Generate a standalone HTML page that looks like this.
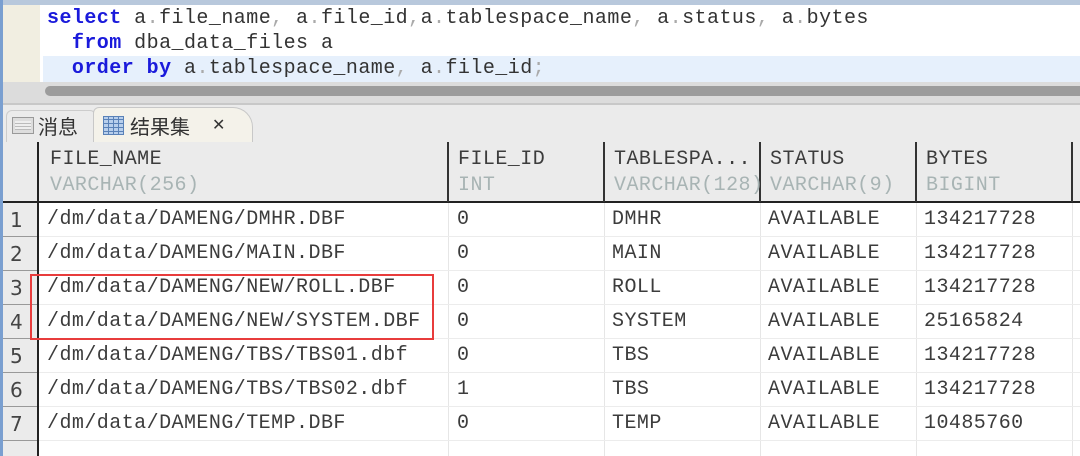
<!DOCTYPE html>
<html><head><meta charset="utf-8"><style>
*{margin:0;padding:0;box-sizing:border-box}
body{width:1080px;height:456px;overflow:hidden;background:#fff;position:relative;font-family:"Liberation Mono","DejaVu Sans Mono",monospace;}
.abs{position:absolute}
.code{font-size:20px;letter-spacing:0.45px;white-space:pre;color:#333;line-height:25px}
.kw{color:#1a1adb;font-weight:bold}
.p{color:#aaa}
.cell{position:absolute;font-size:20px;letter-spacing:0.45px;color:#3c3c3c;white-space:pre}
.sub{color:#a8b4b4}
</style></head><body>
<div class="abs" style="left:0;top:0;width:3px;height:456px;background:#7a9fd0"></div>
<div class="abs" style="left:3px;top:0;width:1077px;height:5px;background:#b8c8dc"></div>
<div class="abs" style="left:3px;top:5px;width:37px;height:78px;background:#f1eee1"></div>
<div class="abs" style="left:40px;top:5px;width:3px;height:78px;background:#fff"></div>
<div class="abs" style="left:43px;top:56px;width:1037px;height:26px;background:#e6f0fc"></div>
<div class="abs code" style="left:47px;top:6px"><span class="kw">select</span> a<span class="p">.</span>file_name<span class="p">,</span> a<span class="p">.</span>file_id<span class="p">,</span>a<span class="p">.</span>tablespace_name<span class="p">,</span> a<span class="p">.</span>status<span class="p">,</span> a<span class="p">.</span>bytes
  <span class="kw">from</span> dba_data_files a
  <span class="kw">order by</span> a<span class="p">.</span>tablespace_name<span class="p">,</span> a<span class="p">.</span>file_id<span class="p">;</span></div>
<div class="abs" style="left:3px;top:82px;width:1077px;height:21px;background:#dcdcdc"></div>
<div class="abs" style="left:45px;top:86px;width:1035px;height:10px;background:#9c9c9c;border-radius:5px 0 0 5px"></div>
<div class="abs" style="left:3px;top:103px;width:1077px;height:2px;background:#c8c8c8"></div>
<div class="abs" style="left:3px;top:105px;width:1077px;height:37px;background:#ebebeb"></div>
<div class="abs" style="left:6px;top:110px;width:90px;height:32px;border:1px solid #ccc;border-bottom:none;border-radius:6px 6px 0 0"></div>
<div class="abs" style="left:93px;top:107px;width:160px;height:35px;background:#f4f2ea;border:1px solid #c8c8c8;border-bottom:none;border-radius:6px 20px 0 0"></div>
<div class="abs" style="left:12px;top:117px;width:22px;height:17px;border:1px solid #999;background:#ddd"></div>
<div class="abs" style="left:15px;top:121px;width:16px;height:9px;background:repeating-linear-gradient(#eee 0 2px,#bbb 2px 3px)"></div>
<div class="abs" style="left:38px;top:111px;font:20px 'Noto Sans CJK SC',sans-serif;color:#333">消息</div>
<div class="abs" style="left:103px;top:116px;width:21px;height:19px;border:1px solid #5a82b8;background:repeating-linear-gradient(90deg,#b8cfec 0 4px,#5a82b8 4px 5px)"></div>
<div class="abs" style="left:103px;top:116px;width:21px;height:19px;background:repeating-linear-gradient(transparent 0 3px,#5a82b8 3px 4px)"></div>
<div class="abs" style="left:130px;top:111px;font:20px 'Noto Sans CJK SC',sans-serif;color:#333">结果集</div>
<div class="abs" style="left:212px;top:115px;font:16px 'DejaVu Sans',sans-serif;color:#333">✕</div>
<div class="abs" style="left:3px;top:142px;width:1077px;height:60px;background:#ebebeb"></div>
<div class="abs" style="left:3px;top:202px;width:34px;height:254px;background:#ebebeb"></div>
<div class="abs" style="left:37px;top:142px;width:2px;height:314px;background:#222"></div>
<div class="abs" style="left:3px;top:201px;width:1077px;height:2px;background:#222"></div>
<div class="abs" style="left:447px;top:142px;width:2px;height:60px;background:#333"></div>
<div class="abs" style="left:603px;top:142px;width:2px;height:60px;background:#333"></div>
<div class="abs" style="left:759px;top:142px;width:2px;height:60px;background:#333"></div>
<div class="abs" style="left:915px;top:142px;width:2px;height:60px;background:#333"></div>
<div class="abs" style="left:1071px;top:142px;width:2px;height:60px;background:#333"></div>
<div class="abs" style="left:448px;top:203px;width:1px;height:253px;background:#e6e6e6"></div>
<div class="abs" style="left:604px;top:203px;width:1px;height:253px;background:#e6e6e6"></div>
<div class="abs" style="left:760px;top:203px;width:1px;height:253px;background:#e6e6e6"></div>
<div class="abs" style="left:916px;top:203px;width:1px;height:253px;background:#e6e6e6"></div>
<div class="abs" style="left:1072px;top:203px;width:1px;height:253px;background:#e6e6e6"></div>
<div class="cell" style="left:50px;top:148px">FILE_NAME</div><div class="cell sub" style="left:50px;top:174px">VARCHAR(256)</div>
<div class="cell" style="left:458px;top:148px">FILE_ID</div><div class="cell sub" style="left:458px;top:174px">INT</div>
<div class="cell" style="left:614px;top:148px">TABLESPA...</div><div class="cell sub" style="left:614px;top:174px">VARCHAR(128)</div>
<div class="cell" style="left:770px;top:148px">STATUS</div><div class="cell sub" style="left:770px;top:174px">VARCHAR(9)</div>
<div class="cell" style="left:926px;top:148px">BYTES</div><div class="cell sub" style="left:926px;top:174px">BIGINT</div>
<div id="rows"></div>
<script>
var d=[["/dm/data/DAMENG/DMHR.DBF","0","DMHR","134217728"],["/dm/data/DAMENG/MAIN.DBF","0","MAIN","134217728"],["/dm/data/DAMENG/NEW/ROLL.DBF","0","ROLL","134217728"],["/dm/data/DAMENG/NEW/SYSTEM.DBF","0","SYSTEM","25165824"],["/dm/data/DAMENG/TBS/TBS01.dbf","0","TBS","134217728"],["/dm/data/DAMENG/TBS/TBS02.dbf","1","TBS","134217728"],["/dm/data/DAMENG/TEMP.DBF","0","TEMP","10485760"]];
var h="";for(var i=0;i<d.length;i++){var y=203+i*34;
h+='<div class="abs" style="left:3px;top:'+(y+33)+'px;width:34px;height:1px;background:#999"></div>';
h+='<div class="abs" style="left:39px;top:'+(y+33)+'px;width:1041px;height:1px;background:#ececec"></div>';
h+='<div class="cell" style="left:10px;top:'+(y+5)+'px;color:#444;font-family:\'DejaVu Sans\',sans-serif">'+(i+1)+'</div>';
h+='<div class="cell" style="left:47px;top:'+(y+5)+'px">'+d[i][0]+'</div>';
h+='<div class="cell" style="left:457px;top:'+(y+5)+'px">'+d[i][1]+'</div>';
h+='<div class="cell" style="left:612px;top:'+(y+5)+'px">'+d[i][2]+'</div>';
h+='<div class="cell" style="left:768px;top:'+(y+5)+'px">AVAILABLE</div>';
h+='<div class="cell" style="left:924px;top:'+(y+5)+'px">'+d[i][3]+'</div>';}
document.getElementById("rows").innerHTML=h;
</script>
<div class="abs" style="left:30px;top:274px;width:404px;height:66px;border:2px solid #e83c3c"></div>
</body></html>
